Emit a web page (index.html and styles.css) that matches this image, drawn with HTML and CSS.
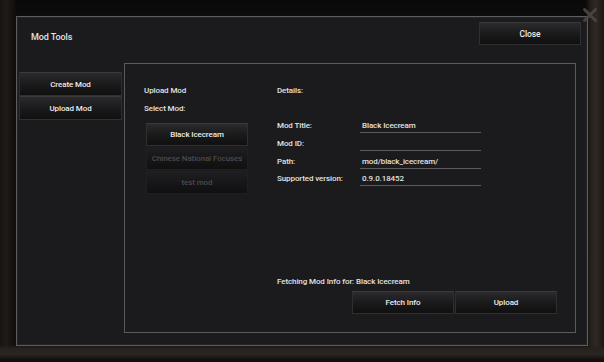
FILE: index.html
```html
<!DOCTYPE html>
<html>
<head>
  <title>Mod Tools</title>
  <link rel="stylesheet" href="styles.css">
</head>
<body>

<div class="screen">
  <svg class="corner-x" width="16" height="16" viewBox="0 0 16 16">
    <path d="M2.5 2.5 L13.5 13.5 M13.5 2.5 L2.5 13.5" stroke="#4a423b" stroke-width="3" stroke-linecap="round"/>
  </svg>

  <div class="window">
    <div class="header">
      <div class="title">Mod Tools</div>
      <button class="btn close-btn">Close</button>
    </div>

    <div class="main">
      <!-- вкладки -->
      <div class="tabs">
        <button class="btn tab">Create Mod</button>
        <button class="btn tab">Upload Mod</button>
      </div>

      <div class="panel">
        <div class="select-col">
          <div class="caption">Upload Mod</div>
          <div class="caption sub">Select Mod:</div>
          <div class="mod-list">
            <button class="btn mod">Black Icecream</button>
            <button class="btn mod disabled">Chinese National Focuses</button>
            <button class="btn mod disabled">test mod</button>
          </div>
        </div>

        <div class="details-col">
          <div class="caption">Details:</div>
          <div class="fields">
            <div class="field"><span class="label">Mod Title:</span><span class="value">Black Icecream</span></div>
            <div class="field"><span class="label">Mod ID:</span><span class="value"></span></div>
            <div class="field"><span class="label">Path:</span><span class="value">mod/black_icecream/</span></div>
            <div class="field"><span class="label">Supported version:</span><span class="value">0.9.0.18452</span></div>
          </div>

          <div class="footer">
            <div class="status">Fetching Mod Info for: Black Icecream</div>
            <div class="actions">
              <button class="btn action">Fetch Info</button>
              <button class="btn action">Upload</button>
            </div>
          </div>
        </div>
      </div>
    </div>
  </div>
</div>

</body>
</html>
```

FILE: styles.css
```css
html, body {
  margin: 0;
  padding: 0;
}
body {
  width: 604px;
  height: 362px;
  overflow: hidden;
  background: #0c0b0b;
  font-family: Roboto, "Liberation Sans", sans-serif;
  font-weight: 500;
  font-size: 8px;
  letter-spacing: -0.1px;
  color: #e2e2e2;
}
.screen {
  position: relative;
  width: 604px;
  height: 362px;
  padding: 16px 0 0 16px;
  box-sizing: border-box;
  background:
    linear-gradient(to bottom, transparent 345px, #25211e 348px, #2b2622 354px, #120f0e 360px),
    linear-gradient(to right, #171311 0, #211b18 6px, #120f0d 14px, transparent 16px, transparent 586px, #221e1b 590px, #302924 596px, #1a1613 604px),
    linear-gradient(to bottom, #0a0909 0, #0d0c0c 15px, #110f0f 100%);
}
.corner-x {
  position: absolute;
  right: 6px;
  top: 7px;
}
.window {
  width: 572px;
  height: 330px;
  box-sizing: border-box;
  border: 1px solid #5d5c5e;
  box-shadow: inset 0 0 0 1px #242326;
  background: #1b1a1c;
  display: flex;
  flex-direction: column;
}
.header {
  height: 46px;
  display: flex;
  justify-content: space-between;
  align-items: flex-start;
}
.title {
  padding: 15px 0 0 14px;
  font-size: 9px;
}
.btn {
  font-family: inherit;
  font-weight: 500;
  font-size: 8px;
  letter-spacing: -0.1px;
  color: #ececec;
  background: linear-gradient(to bottom, #2b2a2c 0%, #1c1b1d 45%, #101010 100%);
  border: 1px solid #2f2e30;
  border-top-color: #3a393b;
  box-sizing: border-box;
  padding: 0;
  cursor: pointer;
}
.close-btn {
  width: 102px;
  height: 23px;
  margin: 5px 6px 0 0;
  padding-top: 1px;
  font-size: 8.5px;
}
.main {
  flex: 1;
  display: flex;
  align-items: flex-start;
  padding-left: 2px;
  gap: 2px;
}
.tabs {
  display: flex;
  flex-direction: column;
  margin-top: 9px;
  width: 103px;
}
.tab {
  height: 24px;
  width: 103px;
}
.panel {
  width: 452px;
  height: 270px;
  box-sizing: border-box;
  border: 1px solid #5a595b;
  display: flex;
  padding: 22px 0 0 19px;
}
.select-col {
  width: 133px;
}
.caption {
  height: 18px;
}
.caption.sub {
  height: 19px;
}
.mod-list {
  display: flex;
  flex-direction: column;
  gap: 1px;
  padding-left: 2px;
  width: 102px;
}
.mod {
  height: 23px;
}
.mod.disabled {
  color: #4b4a4c;
  background: linear-gradient(to bottom, #1e1d1f 0%, #171618 50%, #101010 100%);
  border-color: #1f1e20;
}
.details-col {
  flex: 1;
  display: flex;
  flex-direction: column;
  padding-bottom: 18px;
}
.fields {
  margin-top: 16px;
  display: flex;
  flex-direction: column;
  gap: 4.8px;
}
.field {
  display: flex;
  height: 13px;
  line-height: 12px;
}
.label {
  width: 83px;
}
.value {
  width: 121px;
  height: 13px;
  box-sizing: border-box;
  border-bottom: 1px solid #5b5a5c;
  padding-left: 2px;
}
.footer {
  margin-top: auto;
}
.status {
  margin-bottom: 5px;
}
.actions {
  display: flex;
  gap: 1px;
  padding-left: 75px;
}
.action {
  width: 102px;
  height: 23px;
}
```
